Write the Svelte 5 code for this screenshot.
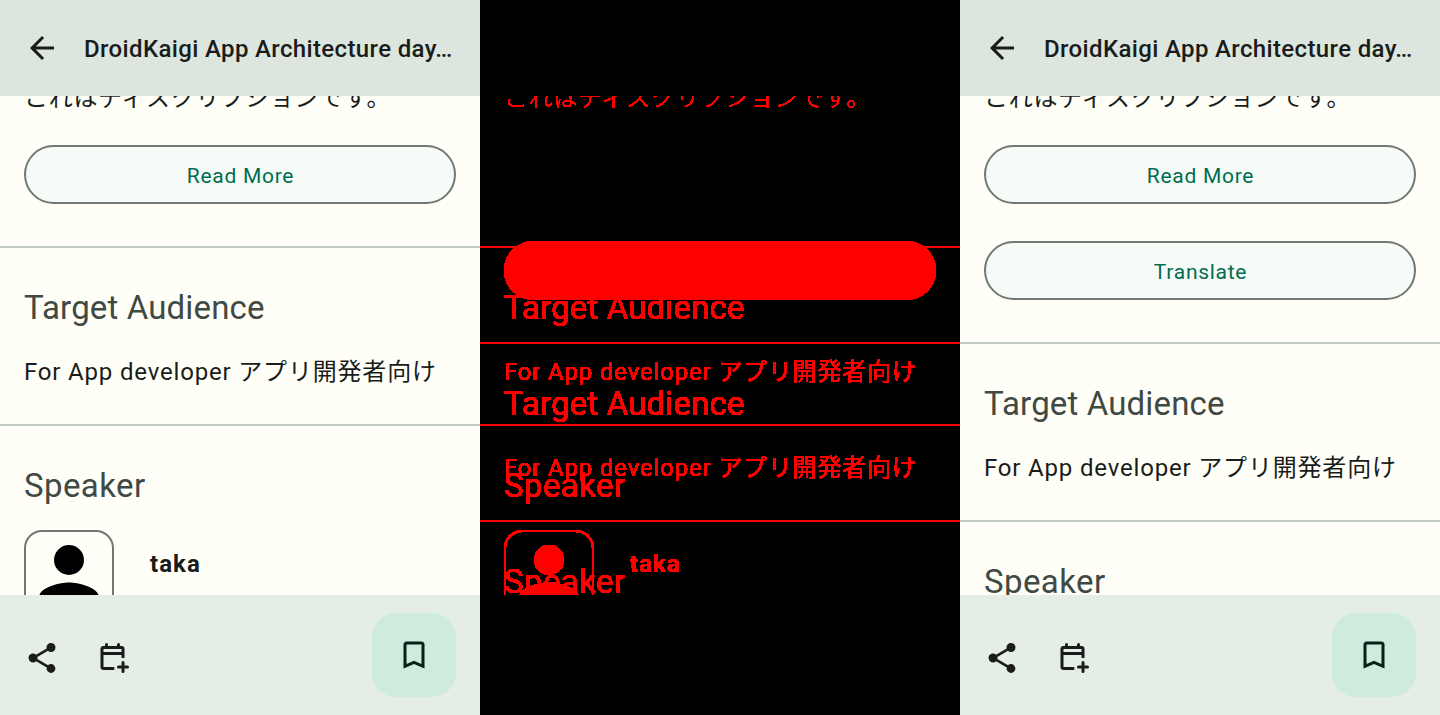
<script>
  const panels = [
    { id: 'before', translate: false },
    { id: 'diff' },
    { id: 'after', translate: true },
  ];
</script>

{#snippet content(translate)}
  <div class="content">
    <p class="description">これはディスクリプションです。</p>
    <button class="pill">Read More</button>
    {#if translate}
      <button class="pill">Translate</button>
    {/if}
    <section class="audience">
      <h2>Target Audience</h2>
      <p>For App developer アプリ開発者向け</p>
    </section>
    <section class="speaker">
      <h2>Speaker</h2>
      <div class="person">
        <div class="avatar">
          <svg width="90" height="90" viewBox="0 0 24 24"><path fill="currentColor" d="M12 12a4 4 0 1 0 0-8 4 4 0 0 0 0 8zm0 2c-2.67 0-8 1.34-8 4v2h16v-2c0-2.66-5.33-4-8-4z" /></svg>
        </div>
        <strong>taka</strong>
      </div>
    </section>
  </div>
{/snippet}

<main>
  {#each panels as panel (panel.id)}
    {#if panel.id === 'diff'}
      <div class="panel diff">
        <div class="viewport">
          {@render content(false)}
          {@render content(true)}
        </div>
      </div>
    {:else}
      <div class="panel">
        <header>
          <svg width="36" height="36" viewBox="0 0 24 24"><path fill="currentColor" d="M20 11H7.83l5.59-5.59L12 4l-8 8 8 8 1.41-1.41L7.83 13H20v-2z" /></svg>
          <h1>DroidKaigi App Architecture day…</h1>
        </header>
        <div class="viewport">
          {@render content(panel.translate)}
        </div>
        <footer>
          <svg width="36" height="36" viewBox="0 0 24 24"><path fill="currentColor" d="M18 16.08c-.76 0-1.44.3-1.96.77L8.91 12.7c.05-.23.09-.46.09-.7s-.04-.47-.09-.7l7.05-4.11c.54.5 1.25.81 2.04.81a3 3 0 1 0-3-3c0 .24.04.47.09.7L8.04 9.81A3 3 0 1 0 6 15c.79 0 1.5-.31 2.04-.81l7.12 4.16c-.05.21-.08.43-.08.65A2.92 2.92 0 1 0 18 16.08z" /></svg>
          <svg width="36" height="36" viewBox="0 0 24 24" fill="none" stroke="currentColor" stroke-width="2">
            <path d="M12.2 19H5a1 1 0 0 1-1-1V6a1 1 0 0 1 1-1h12a1 1 0 0 1 1 1v6M4 9h14" />
            <path stroke-linecap="round" d="M7 3v1.5M15 3v1.5M18 15v6M15 18h6" />
          </svg>
          <button class="fab" aria-label="Bookmark">
            <svg width="36" height="36" viewBox="0 0 24 24"><path fill="currentColor" d="M17 3H7c-1.1 0-2 .9-2 2v16l7-3 7 3V5c0-1.1-.9-2-2-2zm0 15l-5-2.18L7 18V5h10v13z" /></svg>
          </button>
        </footer>
      </div>
    {/if}
  {/each}
  <svg class="defs" width="0" height="0">
    <filter id="solid" x="0" y="0" width="1" height="1" color-interpolation-filters="sRGB">
      <feColorMatrix values="0 0 0 0 1  0 0 0 0 0  0 0 0 0 0  0 0 0 60 -1" />
    </filter>
  </svg>
</main>

<style>
  :global(body) {
    margin: 0;
    overflow: hidden;
  }
  main {
    display: grid;
    grid-template-columns: repeat(3, 480px);
    width: 1440px;
    height: 715px;
    font-family: Roboto, 'Noto Sans CJK JP', sans-serif;
    color: #191c1a;
  }
  .panel {
    display: grid;
    grid-template-rows: 96px 499px 120px;
    height: 715px;
    background: #fffff8;
    overflow: hidden;
  }
  header {
    display: flex;
    align-items: center;
    gap: 24px;
    padding-left: 24px;
    background: #dde6de;
  }
  h1,
  h2,
  p {
    margin: 0;
    white-space: nowrap;
  }
  h1 {
    font-size: 24px;
    line-height: 36px;
    font-weight: 500;
    letter-spacing: 0.36px;
    padding-top: 1px;
  }
  svg {
    display: block;
    flex: none;
  }
  .viewport {
    display: grid;
    grid-row: 2;
    overflow: hidden;
    min-height: 0;
  }
  .content {
    grid-area: 1 / 1;
    display: flex;
    flex-direction: column;
  }
  p {
    font-size: 24px;
    line-height: 36px;
    letter-spacing: 0.82px;
  }
  .description {
    height: 36px;
    margin: -16px 24px 29px;
    letter-spacing: 0.75px;
  }
  .pill {
    box-sizing: border-box;
    flex: none;
    height: 59px;
    margin: 0 24px 37px;
    padding: 2px 0 0 1px;
    border: 2px solid #707973;
    border-radius: 30px;
    background: #f6fbf8;
    color: #006c4f;
    font: 400 21px/30px Roboto, sans-serif;
    letter-spacing: 0.72px;
  }
  section {
    box-sizing: border-box;
    flex: none;
    border-top: 2px solid #bfc9c4;
    padding: 39px 24px 0;
  }
  .audience {
    height: 178px;
    margin-top: 5px;
  }
  h2 {
    height: 42px;
    font-size: 33px;
    line-height: 42px;
    font-weight: 400;
    letter-spacing: 0.15px;
    color: #404944;
  }
  .speaker h2 {
    letter-spacing: 0.4px;
  }
  .audience p {
    margin-top: 25px;
  }
  .person {
    display: flex;
    align-items: flex-start;
    gap: 36px;
    margin-top: 23px;
  }
  .avatar {
    box-sizing: border-box;
    width: 90px;
    height: 90px;
    border: 2px solid #707973;
    border-radius: 18px;
    color: #000;
  }
  .avatar svg {
    margin: -2px;
  }
  strong {
    margin-top: 16px;
    font-size: 24px;
    line-height: 36px;
    font-weight: 700;
    letter-spacing: 1.05px;
  }
  footer {
    display: flex;
    align-items: center;
    gap: 36px;
    padding: 0 24px;
    background: #e5eee6;
  }
  footer > svg {
    margin-top: 6px;
  }
  .fab {
    display: grid;
    place-items: center;
    width: 84px;
    height: 84px;
    margin-left: auto;
    padding: 0;
    border: 0;
    border-radius: 24px;
    background: #cfebdd;
    color: #072019;
  }
  .diff {
    background: #000;
  }
  .diff .content {
    filter: url(#solid);
  }
  .diff .content:first-child .pill {
    visibility: hidden;
  }
  .diff .content:last-child .pill:first-of-type,
  .diff .content:last-child .description,
  .diff .content:last-child .person {
    visibility: hidden;
  }
  .diff .description {
    font-weight: 300;
  }
  .defs {
    position: absolute;
  }
</style>
